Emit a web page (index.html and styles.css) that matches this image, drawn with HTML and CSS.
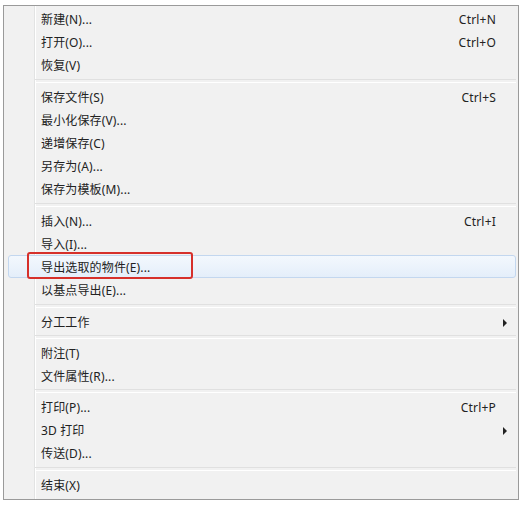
FILE: index.html
```html
<!DOCTYPE html>
<html lang="zh-CN">
<head>
  <meta charset="UTF-8">
  <title>文件菜单</title>
  <link rel="stylesheet" href="styles.css">
</head>
<body>
  <div class="menu">
    <div class="item"><span class="label">新建(N)...</span><span class="key">Ctrl+N</span><span class="sub"></span></div>
    <div class="item"><span class="label">打开(O)...</span><span class="key">Ctrl+O</span><span class="sub"></span></div>
    <div class="item"><span class="label">恢复(V)</span><span class="key"></span><span class="sub"></span></div>
    <div class="sep"></div>

    <div class="item"><span class="label">保存文件(S)</span><span class="key">Ctrl+S</span><span class="sub"></span></div>
    <div class="item"><span class="label">最小化保存(V)...</span><span class="key"></span><span class="sub"></span></div>
    <div class="item"><span class="label">递增保存(C)</span><span class="key"></span><span class="sub"></span></div>
    <div class="item"><span class="label">另存为(A)...</span><span class="key"></span><span class="sub"></span></div>
    <div class="item"><span class="label">保存为模板(M)...</span><span class="key"></span><span class="sub"></span></div>
    <div class="sep"></div>

    <div class="item"><span class="label">插入(N)...</span><span class="key">Ctrl+I</span><span class="sub"></span></div>
    <div class="item"><span class="label">导入(I)...</span><span class="key"></span><span class="sub"></span></div>
    <div class="item hover">
      <span class="label">导出选取的物件(E)...</span><span class="key"></span><span class="sub"></span>
      <span class="mark"></span>
    </div>
    <div class="item"><span class="label">以基点导出(E)...</span><span class="key"></span><span class="sub"></span></div>
    <div class="sep"></div>

    <div class="item"><span class="label">分工工作</span><span class="key"></span><span class="sub"><i class="arrow"></i></span></div>
    <div class="sep thin"></div>

    <div class="item"><span class="label">附注(T)</span><span class="key"></span><span class="sub"></span></div>
    <div class="item"><span class="label">文件属性(R)...</span><span class="key"></span><span class="sub"></span></div>
    <div class="sep thin"></div>

    <div class="item"><span class="label">打印(P)...</span><span class="key">Ctrl+P</span><span class="sub"></span></div>
    <div class="item"><span class="label">3D 打印</span><span class="key"></span><span class="sub"><i class="arrow"></i></span></div>
    <div class="item"><span class="label">传送(D)...</span><span class="key"></span><span class="sub"></span></div>
    <div class="sep"></div>

    <div class="item"><span class="label">结束(X)</span><span class="key"></span><span class="sub"></span></div>
  </div>
</body>
</html>
```

FILE: styles.css
```css
* {
  margin: 0;
  padding: 0;
  box-sizing: border-box;
}

body {
  background: #fff;
  font-family: "Noto Sans", "Noto Sans CJK SC", sans-serif;
  font-size: 12px;
  color: #222;
}

/* Menu frame with the icon gutter line */
.menu {
  width: 516px;
  margin: 5px 0 0 3px;
  padding: 1px 2px 3px 4px;
  border: 1px solid #9a9a9a;
  background: linear-gradient(to right,
    #f1f1f1 30px,
    #e2e3e3 30px, #e2e3e3 31px,
    #ffffff 31px, #ffffff 32px,
    #f1f1f1 32px);
}

.item {
  position: relative;
  display: grid;
  grid-template-columns: 1fr auto 19px;
  align-items: center;
  height: 23px;
  line-height: 23px;
  padding-left: 33px;
  border: 1px solid transparent;
  border-radius: 3px;
}

.item .label {
  margin-left: -1px;
  letter-spacing: 0.15px;
}

.item .key {
  text-align: right;
  letter-spacing: 0.2px;
}

.sub {
  display: flex;
  align-items: center;
  height: 100%;
  padding-left: 7px;
}

.arrow {
  display: block;
  width: 0;
  height: 0;
  border-top: 4px solid transparent;
  border-bottom: 4px solid transparent;
  border-left: 4px solid #222;
}

/* Hovered item */
.item.hover {
  background: linear-gradient(to bottom, #f3f8fd, #e4eefa);
  border-color: #c3d7ef;
}

.mark {
  position: absolute;
  left: 18px;
  top: -4px;
  width: 166px;
  height: 27px;
  border: 2px solid #d6302b;
  border-radius: 3px;
}

/* Separator */
.sep {
  height: 9px;
  display: flex;
  align-items: center;
  padding-left: 27px;
}

.sep.thin {
  height: 8px;
}

.sep::before {
  content: "";
  display: block;
  width: 100%;
  height: 2px;
  border-top: 1px solid #e0e0e0;
  border-bottom: 1px solid #ffffff;
}
```
